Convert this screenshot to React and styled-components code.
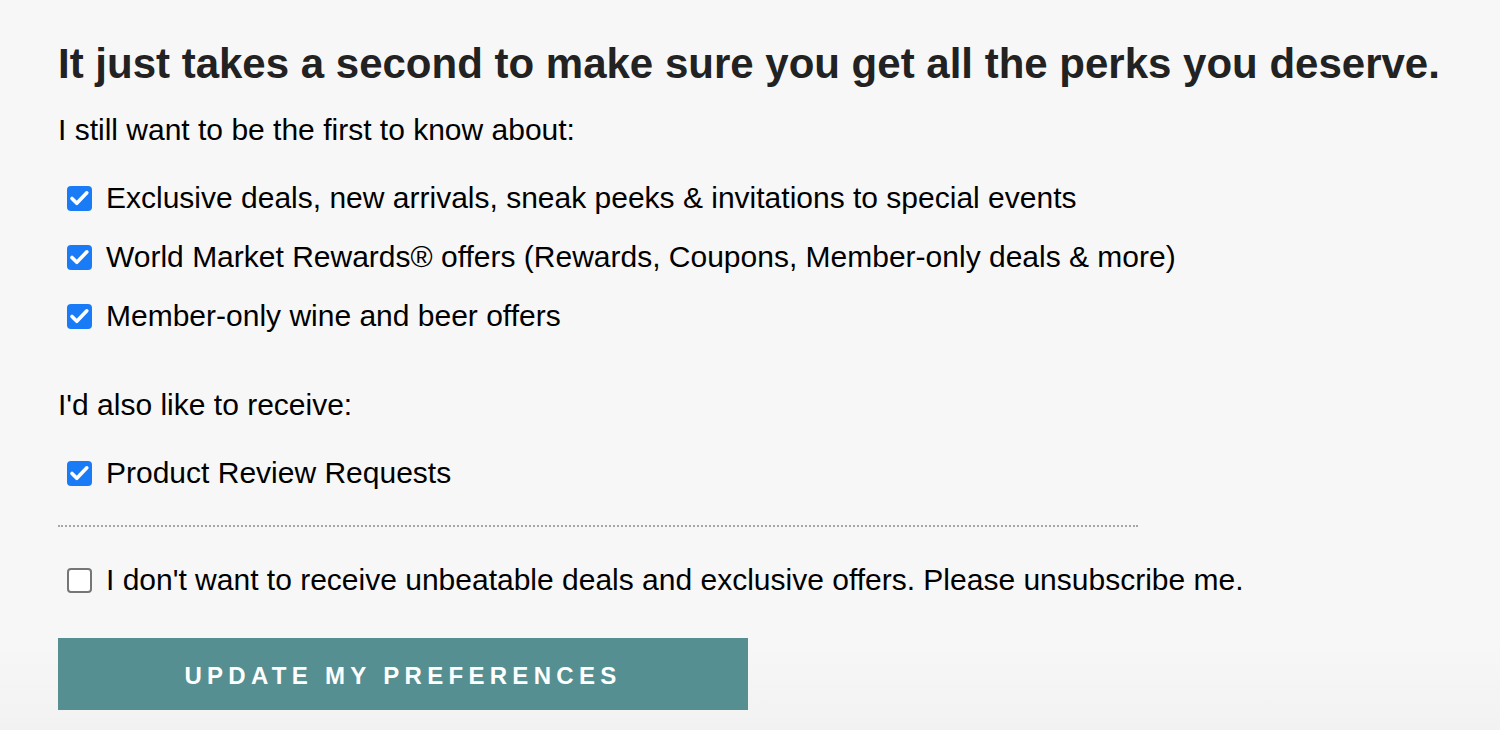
import React, { useState } from "react"
import styled, { createGlobalStyle } from "styled-components"

const GlobalStyle = createGlobalStyle`
  html, body {
    margin: 0;
    padding: 0;
    background: #f7f7f7;
  }
  body {
    font-family: "Liberation Sans", Arial, sans-serif;
    color: #000;
  }
`

const Page = styled.div`
  min-height: 730px;
  box-sizing: border-box;
  padding: 38px 0 0 58px;
  background: linear-gradient(to bottom, #f7f7f7 0%, #f7f7f7 88%, #f2f2f2 100%);
`

const Heading = styled.h1`
  margin: 0;
  font-size: 42px;
  font-weight: bold;
  line-height: 52px;
  color: #222;
  white-space: nowrap;
`

const Lead = styled.p`
  margin: ${(p) => p.$top || 0}px 0 0;
  font-size: 30px;
  line-height: 36px;
`

const List = styled.div`
  display: flex;
  flex-direction: column;
  gap: 23px;
  margin-top: ${(p) => p.$top || 0}px;
`

const Row = styled.label`
  display: flex;
  align-items: center;
  gap: 14px;
  padding-left: 9px;
  font-size: 30px;
  line-height: 36px;
  white-space: nowrap;
  cursor: pointer;
`

const Box = styled.span`
  flex: none;
  width: 25px;
  height: 25px;
  box-sizing: border-box;
  border-radius: 4px;
  display: flex;
  align-items: center;
  justify-content: center;
  background: ${(p) => (p.$checked ? "#1a7bf6" : "#fff")};
  border: ${(p) => (p.$checked ? "none" : "2px solid #767676")};
`

const Divider = styled.hr`
  width: 1080px;
  margin: 34px 0 0;
  border: none;
  border-top: 2px dotted #a6a6a6;
  height: 0;
`

const Button = styled.button`
  display: block;
  margin-top: 40px;
  width: 690px;
  height: 72px;
  padding: 4px 0 0;
  border: none;
  background: #568f91;
  color: #fff;
  font-family: "Liberation Sans", Arial, sans-serif;
  font-size: 24px;
  font-weight: bold;
  letter-spacing: 5.3px;
  text-transform: uppercase;
  cursor: pointer;
`

const Check = () => (
  <svg width="25" height="25" viewBox="0 0 25 25">
    <path
      d="M5 12.5 L9.8 17.3 L19.8 6.8"
      fill="none"
      stroke="#fff"
      strokeWidth="3.6"
      strokeLinecap="round"
      strokeLinejoin="round"
    />
  </svg>
)

const Option = ({ checked, onToggle, children }) => (
  <Row onClick={onToggle}>
    <Box $checked={checked}>{checked && <Check />}</Box>
    {children}
  </Row>
)

export default function App() {
  const [prefs, setPrefs] = useState({
    deals: true,
    rewards: true,
    wine: true,
    reviews: true,
    unsubscribe: false,
  })
  const toggle = (k) => setPrefs((s) => ({ ...s, [k]: !s[k] }))

  return (
    <>
      <GlobalStyle />
      <Page>
        <Heading>It just takes a second to make sure you get all the perks you deserve.</Heading>
        <Lead $top={22}>I still want to be the first to know about:</Lead>
        <List $top={32}>
          <Option checked={prefs.deals} onToggle={() => toggle("deals")}>
            Exclusive deals, new arrivals, sneak peeks &amp; invitations to special events
          </Option>
          <Option checked={prefs.rewards} onToggle={() => toggle("rewards")}>
            World Market Rewards® offers (Rewards, Coupons, Member-only deals &amp; more)
          </Option>
          <Option checked={prefs.wine} onToggle={() => toggle("wine")}>
            Member-only wine and beer offers
          </Option>
        </List>
        <Lead $top={53}>I'd also like to receive:</Lead>
        <List $top={32}>
          <Option checked={prefs.reviews} onToggle={() => toggle("reviews")}>
            Product Review Requests
          </Option>
        </List>
        <Divider />
        <List $top={35}>
          <Option checked={prefs.unsubscribe} onToggle={() => toggle("unsubscribe")}>
            I don't want to receive unbeatable deals and exclusive offers. Please unsubscribe me.
          </Option>
        </List>
        <Button>Update my preferences</Button>
      </Page>
    </>
  )
}
